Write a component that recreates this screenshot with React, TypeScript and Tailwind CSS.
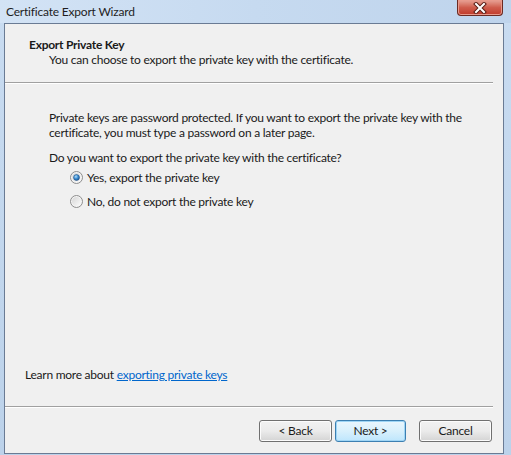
import React from 'react';

const font = { fontFamily: 'Lato, "Noto Sans", "Open Sans", sans-serif' };

function Radio({ checked }: { checked?: boolean }) {
  const id = checked ? 'rbg1' : 'rbg0';
  return (
    <svg width="13" height="13" viewBox="0 0 13 13" className="shrink-0">
      <defs>
        <linearGradient id={id} x1="0" y1="0" x2="1" y2="1">
          <stop offset="0" stopColor="#d6d6d6" />
          <stop offset="1" stopColor="#fbfbfb" />
        </linearGradient>
        <radialGradient id="rdot" cx="0.4" cy="0.35" r="0.7">
          <stop offset="0" stopColor="#b3dcf8" />
          <stop offset="0.5" stopColor="#3a8ed3" />
          <stop offset="1" stopColor="#1a4f8a" />
        </radialGradient>
      </defs>
      <circle cx="6.5" cy="6.5" r="6" fill="#f4f4f4" stroke="#8d8d8d" strokeWidth="1" />
      <circle cx="6.5" cy="6.5" r="4.5" fill={`url(#${id})`} />
      {checked && <circle cx="6.5" cy="6.5" r="3" fill="url(#rdot)" stroke="#1b4a7e" strokeWidth="0.5" />}
    </svg>
  );
}

function Button({ label, primary, width }: { label: string; primary?: boolean; width: string }) {
  return (
    <button
      className={`${width} h-[22px] rounded-[3px] border text-[12px] text-[#1a1a1a] leading-none ${
        primary
          ? 'border-[#3c7fb1] bg-gradient-to-b from-[#eaf6fd] via-[#d9f0fc] to-[#bee6fd] shadow-[inset_0_0_0_1px_#9fd5f5]'
          : 'border-[#707070] bg-gradient-to-b from-[#f2f2f2] via-[#ebebeb] to-[#d4d4d4] shadow-[inset_0_0_0_1px_#fcfcfc]'
      }`}
      style={font}
    >
      {label}
    </button>
  );
}

export default function App() {
  return (
    <div className="w-[511px] h-[455px] overflow-hidden flex flex-col bg-gradient-to-b from-[#c9dcf1] to-[#bcd2ea]" style={font}>
      {/* Title bar */}
      <div className="relative h-[23px] shrink-0 bg-gradient-to-r from-[#d3e3f5] via-[#c6daf0] to-[#bfd4ec]">
        <span className="absolute left-[6px] top-[3px] text-[12px] tracking-[-0.2px] text-[#1e1e1e]">Certificate Export Wizard</span>
        <div className="absolute left-[457px] top-0 w-[46px] h-[16px] rounded-b-[4px] border border-t-0 border-[#6b2a22] bg-gradient-to-b from-[#e7a397] via-[#cf5c4c] to-[#c0392a] flex items-center justify-center shadow-[inset_0_0_0_1px_#e89a8c]">
          <svg width="14" height="12" viewBox="0 0 14 12">
            <path d="M3 2 L11 10 M11 2 L3 10" stroke="#5a1e16" strokeWidth="4" strokeLinecap="square" />
            <path d="M3 2 L11 10 M11 2 L3 10" stroke="#ffffff" strokeWidth="2" strokeLinecap="square" />
          </svg>
        </div>
      </div>

      {/* Client area */}
      <div className="ml-[4px] mr-[7px] mb-[1px] h-[431px] border border-[#6a7b94] bg-[#f0f0f0] flex flex-col text-[12px] tracking-[-0.25px] text-[#1a1a1a]">
        <div className="pl-[24px] pt-[13px] h-[58px]">
          <div className="font-bold leading-[15px]">Export Private Key</div>
          <div className="pl-[20px] leading-[15px]">You can choose to export the private key with the certificate.</div>
        </div>
        <div className="mr-[10px] h-px bg-[#a0a0a0] border-b border-white box-content" />

        <div className="pl-[44px] pt-[26px] flex-1 flex flex-col">
          <p className="leading-[15px] whitespace-nowrap">
            Private keys are password protected. If you want to export the private key with the
            <br />
            certificate, you must type a password on a later page.
          </p>
          <p className="mt-[10px] leading-[15px]">Do you want to export the private key with the certificate?</p>
          <div className="pl-[21px] mt-[5px] flex flex-col gap-[9px]">
            <label className="flex items-center gap-[4px] h-[15px]">
              <Radio checked />
              <span>Yes, export the private key</span>
            </label>
            <label className="flex items-center gap-[4px] h-[15px]">
              <Radio />
              <span>No, do not export the private key</span>
            </label>
          </div>
          <div className="flex-1" />
          <p className="-ml-[24px] mb-[24px] leading-[15px]">
            Learn more about <span className="text-[#0066cc] underline">exporting private keys</span>
          </p>
        </div>

        <div className="mr-[10px] h-px bg-[#a0a0a0] border-b border-white box-content" />
        <div className="flex items-start pt-[12px] pl-[254px] h-[45px]">
          <Button label="< Back" width="w-[73px]" />
          <div className="ml-[3px]">
            <Button label="Next >" primary width="w-[71px]" />
          </div>
          <div className="ml-[13px]">
            <Button label="Cancel" width="w-[73px]" />
          </div>
        </div>
      </div>
    </div>
  );
}
